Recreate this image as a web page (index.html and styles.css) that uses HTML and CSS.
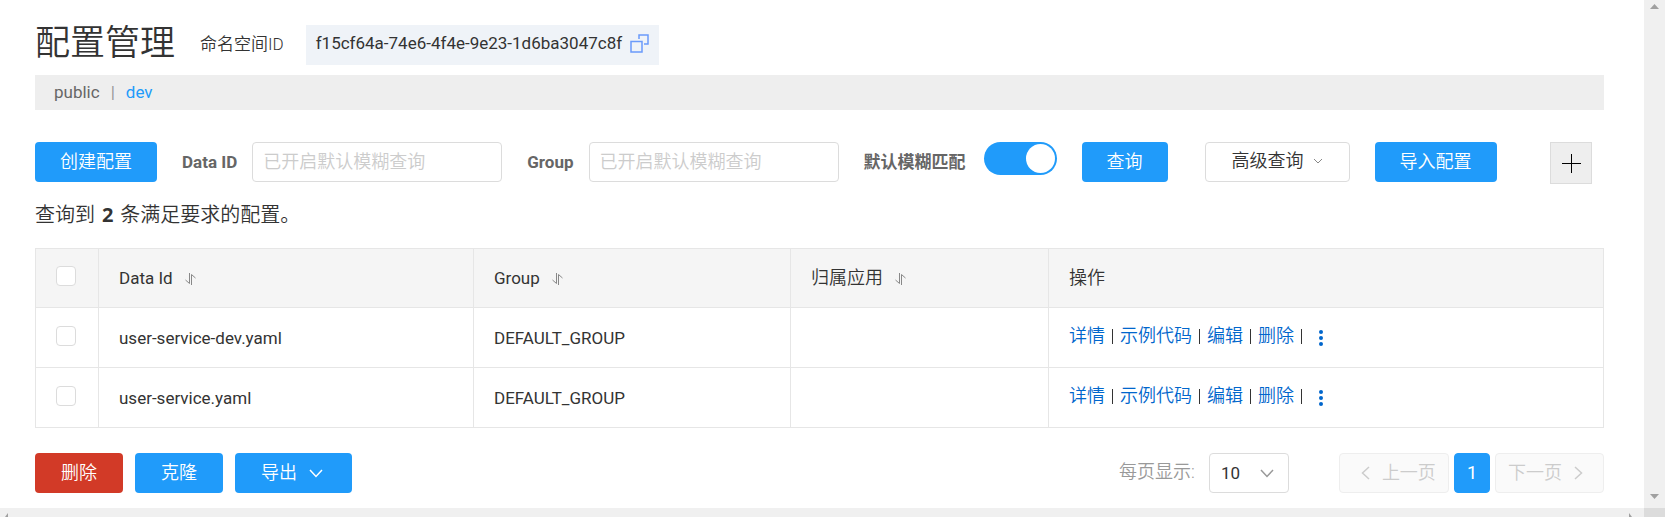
FILE: index.html
```html
<!DOCTYPE html>
<html lang="zh-CN">
<head>
<meta charset="utf-8">
<title>配置管理</title>
<link rel="stylesheet" href="styles.css">
</head>
<body>
<div class="shell">
  <main class="page">
    <header class="head">
      <h1 class="title">配置管理</h1>
      <span class="ns-label">命名空间ID</span>
      <span class="ns-id">f15cf64a-74e6-4f4e-9e23-1d6ba3047c8f
        <button class="copy" aria-label="复制"><svg width="19" height="19" viewBox="0 0 19 19"><path d="M1 7.500h11v10.500h-11zM9 5V1h9v9h-4"/></svg></button>
      </span>
    </header>
    <nav class="spaces">
      <a class="space" href="#">public</a>
      <span class="bar">|</span>
      <a class="space current" href="#">dev</a>
    </nav>
    <form class="tools">
      <button class="btn primary" type="button">创建配置</button>
      <div class="field">
        <label for="data-id">Data ID</label>
        <input class="text" id="data-id" type="text" placeholder="已开启默认模糊查询">
      </div>
      <div class="field">
        <label for="group">Group</label>
        <input class="text" id="group" type="text" placeholder="已开启默认模糊查询">
      </div>
      <div class="field">
        <label for="fuzzy">默认模糊匹配</label>
        <input class="switch" id="fuzzy" type="checkbox" role="switch" checked>
      </div>
      <button class="btn primary" type="button">查询</button>
      <button class="btn plain advanced" type="button">高级查询<svg width="10" height="6" viewBox="0 0 10 6"><path d="M1 1l4 4 4-4"/></svg></button>
      <button class="btn primary" type="button">导入配置</button>
      <button class="add" type="button" aria-label="添加"><svg width="19" height="19" viewBox="0 0 19 19"><path d="M9.500 0v19M0 9.500h19"/></svg></button>
    </form>
    <p class="count">查询到 <strong>2</strong> 条满足要求的配置。</p>
    <table class="list">
      <colgroup><col class="c-check"><col class="c-id"><col class="c-group"><col class="c-app"><col></colgroup>
      <thead>
        <tr>
          <th><input class="tick" type="checkbox" aria-label="全选"></th>
          <th>Data Id<svg class="sort" width="11" height="12" viewBox="0 0 11 12"><path d="M4.500 0v10.500L.5 7M6.500 12V1.500l4 3.500"/></svg></th>
          <th>Group<svg class="sort" width="11" height="12" viewBox="0 0 11 12"><path d="M4.500 0v10.500L.5 7M6.500 12V1.500l4 3.500"/></svg></th>
          <th class="cjk">归属应用<svg class="sort" width="11" height="12" viewBox="0 0 11 12"><path d="M4.500 0v10.500L.5 7M6.500 12V1.500l4 3.500"/></svg></th>
          <th class="cjk">操作</th>
        </tr>
      </thead>
      <tbody>
        <tr>
          <td><input class="tick" type="checkbox" aria-label="user-service-dev.yaml"></td>
          <td>user-service-dev.yaml</td>
          <td>DEFAULT_GROUP</td>
          <td></td>
          <td><div class="actions"><a href="#">详情</a><i></i><a href="#">示例代码</a><i></i><a href="#">编辑</a><i></i><a href="#">删除</a><i></i><button class="more" aria-label="更多"><svg width="4" height="16" viewBox="0 0 4 16"><circle cx="2" cy="2" r="2"/><circle cx="2" cy="8" r="2"/><circle cx="2" cy="14" r="2"/></svg></button></div></td>
        </tr>
        <tr>
          <td><input class="tick" type="checkbox" aria-label="user-service.yaml"></td>
          <td>user-service.yaml</td>
          <td>DEFAULT_GROUP</td>
          <td></td>
          <td><div class="actions"><a href="#">详情</a><i></i><a href="#">示例代码</a><i></i><a href="#">编辑</a><i></i><a href="#">删除</a><i></i><button class="more" aria-label="更多"><svg width="4" height="16" viewBox="0 0 4 16"><circle cx="2" cy="2" r="2"/><circle cx="2" cy="8" r="2"/><circle cx="2" cy="14" r="2"/></svg></button></div></td>
        </tr>
      </tbody>
    </table>
    <footer class="foot">
      <button class="btn danger">删除</button>
      <button class="btn primary">克隆</button>
      <button class="btn primary export">导出<svg width="14" height="9" viewBox="0 0 14 9"><path d="M1 1l6 6.500L13 1"/></svg></button>
      <div class="pager">
        <label class="size-label" for="size">每页显示:</label>
        <span class="size">
          <select id="size"><option>10</option></select>
          <svg width="14" height="9" viewBox="0 0 14 9"><path d="M1 1l6 6.500L13 1"/></svg>
        </span>
        <button class="page-btn prev" disabled><svg width="9" height="14" viewBox="0 0 9 14"><path d="M8 1L1.500 7 8 13"/></svg>上一页</button>
        <button class="page-btn active">1</button>
        <button class="page-btn next" disabled>下一页<svg width="9" height="14" viewBox="0 0 9 14"><path d="M1 1l6.500 6L1 13"/></svg></button>
      </div>
    </footer>
  </main>
  <div class="track vertical">
    <svg width="9" height="5" viewBox="0 0 9 5"><path d="M0 5L4.500 0 9 5z"/></svg>
    <svg width="9" height="5" viewBox="0 0 9 5"><path d="M0 0h9L4.500 5z"/></svg>
  </div>
  <div class="track horizontal">
    <svg width="3" height="4" viewBox="0 0 3 4"><path d="M3 0v4H0z"/></svg>
    <svg width="3" height="4" viewBox="0 0 3 4"><path d="M0 0v4h3z"/></svg>
  </div>
  <div class="corner"></div>
</div>
</body>
</html>
```
FILE: styles.css
```css
* { box-sizing: border-box; }
body {
  margin: 0;
  background: #fff;
  color: #333;
  font: 400 17px/24px Roboto, "Noto Sans CJK SC", sans-serif;
}
button, input, select { font: inherit; color: inherit; margin: 0; }
button { border: 0; padding: 0; background: none; white-space: nowrap; }
a { text-decoration: none; color: inherit; }
svg { fill: none; stroke: currentColor; flex: none; }

.shell {
  display: grid;
  grid-template: 1fr 9px / 1fr 21px;
  min-height: 100vh;
}
.page { padding: 20px 40px 15px 35px; min-width: 0; }

.head { display: flex; align-items: center; height: 48px; }
.title { margin: 0 25px 0 0; font-size: 35px; line-height: 48px; font-weight: 350; }
.ns-label { margin-right: 22px; font-weight: 350; }
.ns-id {
  display: flex;
  align-items: center;
  gap: 8px;
  height: 40px;
  margin-top: 1px;
  padding: 0 10px 3px;
  background: #eff3f8;
}
.copy { display: flex; color: #6b9bfa; }
.copy svg { stroke-width: 1.500; }

.spaces {
  display: flex;
  align-items: center;
  gap: 11px;
  height: 35px;
  margin-top: 7px;
  padding: 0 19px 1px;
  background: #eee;
  color: #666;
}
.bar { color: #999; }
.space.current { color: #209bfa; }

.tools { display: flex; align-items: flex-start; gap: 25px; margin-top: 32px; }
.btn {
  display: flex;
  align-items: center;
  justify-content: center;
  height: 40px;
  padding: 0 25px;
  border-radius: 4px;
  font-size: 18px;
  font-weight: 350;
}
.primary { background: #209bfa; color: #fff; }
.danger { background: #d23a27; color: #fff; }
.plain { border: 1px solid #dcdcdc; background: #fff; color: #333; }
.advanced { gap: 9px; margin-left: 12px; padding: 0 26px 2px; }
.advanced svg { color: #888; }
.field { display: flex; }
.field label { line-height: 40px; margin-right: 15px; font-weight: 700; color: #666; }
.text {
  width: 250px;
  height: 40px;
  padding: 0 10px;
  border: 1px solid #dcdcdc;
  border-radius: 4px;
  background: #fff;
}
.text::placeholder { color: #ccc; font-size: 18px; font-weight: 350; }
.switch {
  appearance: none;
  width: 73px;
  height: 33px;
  margin-left: 3px;
  border-radius: 17px;
  padding: 2px;
  background: #209bfa;
}
.switch::before {
  content: "";
  display: block;
  width: 29px;
  height: 29px;
  margin-left: auto;
  border-radius: 50%;
  background: #fff;
}
.add {
  display: flex;
  align-items: center;
  justify-content: center;
  width: 42px;
  height: 42px;
  margin: 0 12px 0 auto;
  border: 1px solid #dcdcdc;
  background: #eee;
  color: #000;
}

.count { margin: 16px 0 18px; font-size: 20px; line-height: 30px; font-weight: 350; }
.count strong { margin: 0 2px; font-family: "Open Sans", sans-serif; font-weight: 700; }

.list { width: 100%; table-layout: fixed; border-collapse: collapse; }
.c-check { width: 63px; }
.c-id { width: 375px; }
.c-group { width: 317px; }
.c-app { width: 258px; }
.list th, .list td {
  height: 60px;
  padding: 0 20px;
  border: 1px solid #e6e6e6;
  text-align: left;
  font-weight: 400;
}
.list th { height: 59px; background: #f5f5f5; }
.list .cjk { font-size: 18px; font-weight: 350; }
.sort { margin-left: 12px; vertical-align: -1px; color: #888; }
.tick {
  display: block;
  appearance: none;
  width: 20px;
  height: 20px;
  margin-bottom: 4px;
  border: 1px solid #dcdcdc;
  border-radius: 4px;
  background: #fff;
}
.actions {
  display: flex;
  align-items: center;
  padding-bottom: 3px;
  color: #06c;
  font-size: 18px;
  font-weight: 350;
}
.actions i { width: 1px; height: 15px; margin: 0 7px; background: #333; }
.more { display: flex; margin: 4px 0 0 10px; }
.more svg { fill: #06c; stroke: none; }

.foot { display: flex; gap: 12px; margin-top: 25px; }
.foot .btn { padding: 0 26px; }
.foot .export { gap: 12px; padding-right: 29px; }
.export svg, .size svg, .page-btn svg { stroke-width: 1.500; }
.pager { display: flex; margin-left: auto; }
.size-label { line-height: 38px; margin-right: 14px; color: #999; font-size: 18px; font-weight: 350; }
.size { display: grid; align-items: center; margin-right: 45px; }
.size select, .size svg { grid-area: 1 / 1; }
.size svg { justify-self: end; margin-right: 15px; color: #999; pointer-events: none; }
.size select {
  appearance: none;
  width: 80px;
  height: 40px;
  padding: 0 11px;
  border: 1px solid #dcdcdc;
  border-radius: 4px;
  background: #fff;
}
.page-btn {
  display: flex;
  align-items: center;
  gap: 12px;
  height: 40px;
  padding: 0 12px;
  margin-left: 5px;
  border: 1px solid #eee;
  border-radius: 4px;
  background: #fafafa;
  color: #ccc;
  font-size: 18px;
  font-weight: 350;
}
.prev { padding-left: 21px; }
.next { padding-right: 20px; }
.page-btn.active { border-color: #209bfa; background: #209bfa; color: #fff; font-weight: 400; }

.track { display: flex; justify-content: space-between; background: #f0f0f0; }
.track svg { fill: #a0a0a0; stroke: none; }
.vertical { flex-direction: column; align-items: center; padding: 4px 0 9px; }
.horizontal { padding: 5px 12px 0 5px; }
.corner { background: #dcdcdc; }
```
